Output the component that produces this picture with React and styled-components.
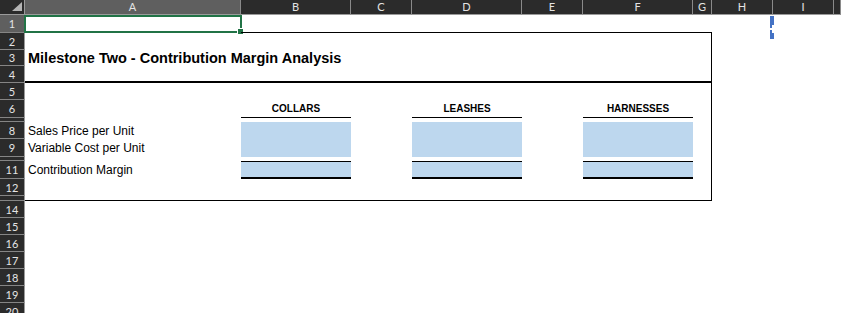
import styled, { createGlobalStyle } from "styled-components";

const GlobalStyle = createGlobalStyle`
  body {
    margin: 0;
    background: #ffffff;
    font-family: Lato, "Liberation Sans", sans-serif;
    overflow: hidden;
  }
`;

const COLUMNS = "25px 216px 110px 61px 110px 61px 110px 19px 61px 61px 1fr";
const LETTERS = ["A", "B", "C", "D", "E", "F", "G", "H", "I", "J"];
const BOX = ["A", "B", "C", "D", "E", "F", "G"];

const fill = { fill: "#bdd7ee" };

const boxRow = (extra = {}) => {
  const cells = { G: { right: true } };
  Object.entries(extra).forEach(([k, v]) => {
    cells[k] = { ...cells[k], ...v };
  });
  return cells;
};

const lineAcross = (width) =>
  Object.fromEntries(BOX.map((c) => [c, { bottom: width }]));

const rows = [
  { n: 1, h: 18, selected: true, cells: { ...lineAcross(1), A: { bottom: 1, active: true } } },
  { n: 2, h: 17, cells: boxRow() },
  {
    n: 3,
    h: 16,
    cells: boxRow({ A: { text: "Milestone Two - Contribution Margin Analysis", title: true } }),
  },
  { n: 4, h: 17, cells: boxRow(lineAcross(2)) },
  { n: 5, h: 17, cells: boxRow() },
  {
    n: 6,
    h: 18,
    cells: boxRow({
      B: { text: "COLLARS", head: true, bottom: 1 },
      D: { text: "LEASHES", head: true, bottom: 1 },
      F: { text: "HARNESSES", head: true, bottom: 1 },
    }),
  },
  { n: 7, h: 4, cells: boxRow() },
  { n: 8, h: 17, cells: boxRow({ A: { text: "Sales Price per Unit" }, B: fill, D: fill, F: fill }) },
  { n: 9, h: 18, cells: boxRow({ A: { text: "Variable Cost per Unit" }, B: fill, D: fill, F: fill }) },
  { n: 10, h: 4, cells: boxRow() },
  {
    n: 11,
    h: 18,
    cells: boxRow({
      A: { text: "Contribution Margin" },
      B: { ...fill, top: 1, bottom: 2 },
      D: { ...fill, top: 1, bottom: 2 },
      F: { ...fill, top: 1, bottom: 2 },
    }),
  },
  { n: 12, h: 17, cells: boxRow() },
  { n: 13, h: 5, cells: boxRow(lineAcross(1)) },
  ...[14, 15, 16, 17, 18, 19, 20].map((n) => ({ n, h: 17, cells: {} })),
];

const Sheet = styled.div`
  position: relative;
  width: 841px;
  height: 313px;
  overflow: hidden;
`;

const HeaderRow = styled.div`
  display: grid;
  grid-template-columns: ${COLUMNS};
  height: 15px;
  background: #2b2b2b;
`;

const Corner = styled.div`
  display: flex;
  align-items: flex-end;
  justify-content: flex-end;
  padding: 0 2px 3px 0;
  box-sizing: border-box;
  border-right: 1px solid #9a9a9a;
  border-bottom: 1px solid #9a9a9a;
`;

const ColumnHeader = styled.div`
  box-sizing: border-box;
  background: ${(p) => (p.$selected ? "#5f5f5f" : "#2b2b2b")};
  border-right: 1px solid #8a8a8a;
  border-bottom: 1px solid #9a9a9a;
  color: #e4e4e4;
  font-size: 11px;
  line-height: 14px;
  text-align: center;
`;

const Row = styled.div`
  display: grid;
  grid-template-columns: ${COLUMNS};
  height: ${(p) => p.$h}px;
`;

const RowHeader = styled.div`
  box-sizing: border-box;
  background: ${(p) => (p.$selected ? "#5f5f5f" : "#2b2b2b")};
  border-right: 1px solid #9a9a9a;
  border-bottom: 1px solid #858585;
  color: #e4e4e4;
  font-size: 11px;
  display: flex;
  align-items: center;
  justify-content: center;
  overflow: hidden;
`;

const Cell = styled.div`
  position: relative;
  box-sizing: border-box;
  display: flex;
  align-items: center;
  justify-content: ${(p) => (p.$center ? "center" : "flex-start")};
  padding-left: ${(p) => (p.$center ? 0 : 3)}px;
  background: ${(p) => p.$fill || "transparent"};
  border-top: ${(p) => p.$top || 0}px solid #000;
  border-bottom: ${(p) => p.$bottom || 0}px solid #000;
  border-right: ${(p) => (p.$right ? 1 : 0)}px solid #000;
  color: #000;
  font-family: "Liberation Sans", Arial, sans-serif;
  font-size: ${(p) => (p.$title ? 14.5 : p.$center ? 10 : 12)}px;
  font-weight: ${(p) => (p.$bold ? 700 : 400)};
  white-space: nowrap;
`;

const Selection = styled.div`
  position: absolute;
  top: 0;
  left: -1px;
  right: -1px;
  bottom: -1px;
  border: 2px solid #217346;
  pointer-events: none;
`;

const FillHandle = styled.div`
  position: absolute;
  right: -4px;
  bottom: -4px;
  width: 5px;
  height: 5px;
  background: #217346;
  border: 1px solid #ffffff;
`;

const Marker = styled.svg`
  position: absolute;
  left: 770px;
  top: 16px;
`;

const Triangle = () => (
  <svg width="10" height="9" viewBox="0 0 10 9">
    <polygon points="10,0 10,9 0,9" fill="#b4b4b4" />
  </svg>
);

const SheetRow = ({ n, h, selected, cells }) => (
  <Row $h={h}>
    <RowHeader $selected={selected}>{h > 8 ? n : null}</RowHeader>
    {LETTERS.map((letter) => {
      const c = cells[letter] || {};
      return (
        <Cell
          key={letter}
          $fill={c.fill}
          $top={c.top}
          $bottom={c.bottom}
          $right={c.right}
          $bold={c.title || c.head}
          $title={c.title}
          $center={c.head}
        >
          {c.text}
          {c.active && (
            <Selection>
              <FillHandle />
            </Selection>
          )}
        </Cell>
      );
    })}
  </Row>
);

const App = () => (
  <Sheet>
    <GlobalStyle />
    <HeaderRow>
      <Corner>
        <Triangle />
      </Corner>
      {LETTERS.map((letter) => (
        <ColumnHeader key={letter} $selected={letter === "A"}>
          {letter === "J" ? "" : letter}
        </ColumnHeader>
      ))}
    </HeaderRow>
    {rows.map((row) => (
      <SheetRow key={row.n} {...row} />
    ))}
    <Marker width="4" height="23" viewBox="0 0 4 23">
      <rect x="0" y="0" width="4" height="9" fill="#4472c4" />
      <rect x="0" y="9" width="2" height="3" fill="#4472c4" />
      <rect x="0" y="14" width="2" height="3" fill="#4472c4" />
      <rect x="0" y="17" width="4" height="6" fill="#4472c4" />
    </Marker>
  </Sheet>
);

export default App;
